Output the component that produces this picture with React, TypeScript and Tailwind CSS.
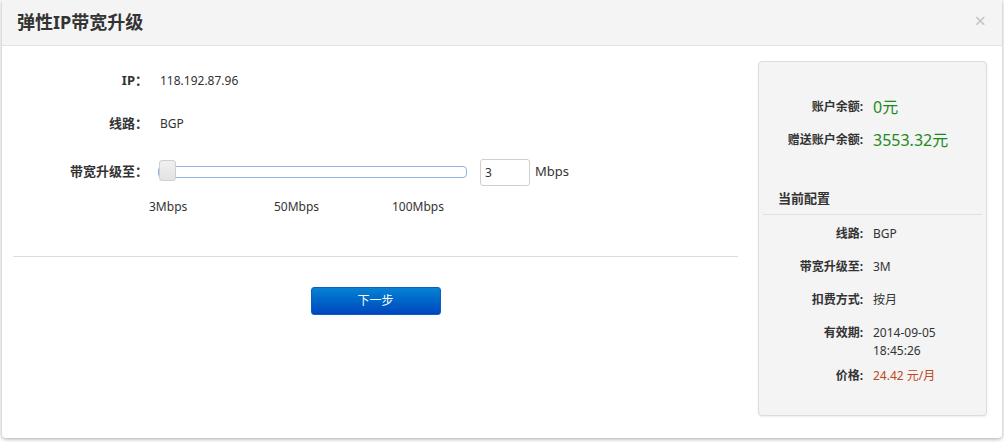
import React, { useState } from 'react';

const font = { fontFamily: '"Noto Sans", "Noto Sans CJK SC", sans-serif' };

const Row: React.FC<{ label: string; children: React.ReactNode; className?: string }> = ({ label, children, className }) => (
  <div className={`flex items-center ${className ?? ''}`}>
    <div className="w-[135px] text-right text-[13px] font-bold text-[#333]">{label}</div>
    <div className="ml-[12px] text-[12px] text-[#333]">{children}</div>
  </div>
);

const InfoRow: React.FC<{ label: string; children: React.ReactNode; className?: string }> = ({ label, children, className }) => (
  <div className={`flex items-start ${className ?? ''}`}>
    <div className="w-[100px] shrink-0 text-right text-[12px] font-bold text-[#333] leading-[18px]">{label}</div>
    <div className="ml-[10px] text-[12px] text-[#333] leading-[18px]">{children}</div>
  </div>
);

const App: React.FC = () => {
  const [bw, setBw] = useState('3');

  return (
    <div className="w-[1004px] h-[442px] bg-white" style={font}>
      <div className="mx-[2px] h-[438px] bg-white rounded-b-[4px] shadow-[0_1px_4px_rgba(0,0,0,0.35)] overflow-hidden">
        <div className="h-[46px] bg-[#f4f4f4] border-b border-[#e3e3e3] flex items-center justify-between pl-[15px] pr-[16px]">
          <h3 className="text-[18px] font-bold text-[#333]">弹性IP带宽升级</h3>
          <span className="text-[20px] leading-none text-[#c4c4c4] -mt-[4px]">×</span>
        </div>

        <div className="flex pl-[11px] pt-[15px]">
          <div className="w-[725px]">
            <Row label="IP：" className="h-[40px]">118.192.87.96</Row>
            <Row label="线路：" className="h-[40px] mt-[3px]">BGP</Row>

            <div className="flex items-center mt-[8px] h-[40px]">
              <div className="w-[135px] text-right text-[13px] font-bold text-[#333]">带宽升级至：</div>
              <div className="ml-[10px] relative w-[309px] h-[12px] border border-[#8db2e3] rounded-[4px] bg-white">
                <div className="absolute left-0 top-[-7px] w-[17px] h-[21px] rounded-[3px] border border-[#cfcfcf] bg-gradient-to-b from-[#f0f0f0] to-[#e3e3e3]" />
              </div>
              <input
                value={bw}
                onChange={(e) => setBw(e.target.value)}
                className="ml-[13px] w-[50px] h-[27px] border border-[#cfcfcf] rounded-[3px] px-[4px] text-[12px] text-[#333] outline-none"
              />
              <span className="ml-[5px] text-[13px] text-[#333]">Mbps</span>
            </div>

            <div className="relative h-[26px] mt-[2px] text-[12px] text-[#333]">
              <span className="absolute left-[136px] top-[4px]">3Mbps</span>
              <span className="absolute left-[261px] top-[4px]">50Mbps</span>
              <span className="absolute left-[379px] top-[4px]">100Mbps</span>
            </div>

            <div className="mt-[36px] border-t border-[#dcdcdc]" />

            <div className="flex justify-center mt-[30px]">
              <button className="w-[130px] h-[28px] rounded-[3px] bg-gradient-to-b from-[#0a82d2] to-[#0045be] text-white text-[12px] border border-[#0a5fc0]">
                下一步
              </button>
            </div>
          </div>

          <div className="ml-[20px] w-[229px] h-[355px] bg-[#f4f4f4] border border-[#dcdcdc] rounded-[4px] shadow-[0_1px_2px_rgba(0,0,0,0.08)] px-[4px]">
            <div className="pt-[33px]">
              <div className="flex items-center">
                <div className="w-[100px] text-right text-[12px] font-bold text-[#333]">账户余额:</div>
                <div className="ml-[10px] text-[16px] text-[#1d8a1d]">0元</div>
              </div>
              <div className="flex items-center mt-[9px]">
                <div className="w-[100px] text-right text-[12px] font-bold text-[#333]">赠送账户余额:</div>
                <div className="ml-[10px] text-[16px] text-[#1d8a1d]">3553.32元</div>
              </div>
            </div>

            <div className="mt-[37px] pl-[15px] pb-[5px] text-[13px] font-bold text-[#333] border-b border-[#e0e0e0]">当前配置</div>

            <div className="pt-[10px]">
              <InfoRow label="线路:">BGP</InfoRow>
              <InfoRow label="带宽升级至:" className="mt-[15px]">3M</InfoRow>
              <InfoRow label="扣费方式:" className="mt-[15px]">按月</InfoRow>
              <InfoRow label="有效期:" className="mt-[15px]">2014-09-05<br />18:45:26</InfoRow>
              <InfoRow label="价格:" className="mt-[7px]">
                <span className="text-[#c0461e]">24.42 元/月</span>
              </InfoRow>
            </div>
          </div>
        </div>
      </div>
    </div>
  );
};

export default App;
